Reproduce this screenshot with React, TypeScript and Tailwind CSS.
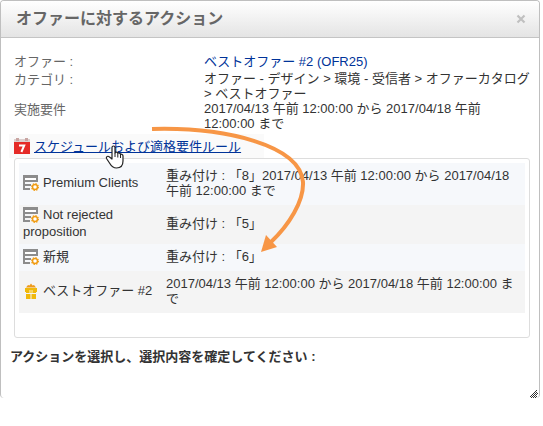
import React from "react";

function CalendarIcon() {
  return (
    <svg className="h-4 w-4 shrink-0" viewBox="0 0 16 16" aria-hidden="true">
      <rect x="0" y="1" width="16" height="4" fill="#dccfce" />
      <rect x="2" y="0" width="3" height="3" fill="#c9a5a2" />
      <rect x="11" y="0" width="3" height="3" fill="#c9a5a2" />
      <rect x="0" y="4" width="16" height="12" fill="#e52b27" />
      <path d="M5 7.5H10.2L7.4 14" fill="none" stroke="#fff" strokeWidth="2" />
    </svg>
  );
}

function RuleIcon() {
  return (
    <svg className="mr-1 inline-block h-4 w-4 align-[-4px]" viewBox="0 0 16 16" aria-hidden="true">
      <path d="M0 0H15V7H2V9H8V11H2V13H7V15H0Z" fill="#8c8c8c" />
      <path d="M2 3H13V5H2Z" fill="#fff" />
      <circle cx="12" cy="12" r="3.4" fill="#fff" stroke="#f09c14" strokeWidth="1.2" strokeDasharray="1.34 1.33" />
      <circle cx="12" cy="12" r="2.5" fill="#fff" stroke="#f09c14" strokeWidth="1.5" />
    </svg>
  );
}

function GiftIcon() {
  return (
    <svg className="mr-1 inline-block h-4 w-4 align-[-4px]" viewBox="0 0 16 16" aria-hidden="true">
      <path d="M3 4.5L5 2L6.5 2.5L8 0.5L9.5 2.5L11 2L13 4.5Z" fill="#ee9a1a" />
      <path d="M2 5H14V9H13V10H9.5V7H6.5V10H3V9H2Z" fill="#f0b90c" />
      <path d="M3 11H7.5V16H3ZM8.5 11H13V16H8.5Z" fill="#f0b90c" />
      <path d="M6.5 7H9.5V10H6.5Z" fill="#f8d45c" />
    </svg>
  );
}

const rules = [
  { icon: "rule", name: "Premium Clients", detail: "重み付け : 「8」2017/04/13 午前 12:00:00 から 2017/04/18 午前 12:00:00 まで", row: "h-[42px] bg-[#f6f8fb]" },
  { icon: "rule", name: "Not rejected proposition", detail: "重み付け : 「5」", row: "h-[39px] bg-[#f4f4f4]" },
  { icon: "rule", name: "新規", detail: "重み付け : 「6」", row: "h-[27px] bg-[#f6f8fb]" },
  { icon: "gift", name: "ベストオファー #2", detail: "2017/04/13 午前 12:00:00 から 2017/04/18 午前 12:00:00 まで", row: "h-[42px] bg-[#f4f4f4]" },
];

export default function App() {
  return (
    <div
      lang="ja"
      className="bg-white pr-[3px] font-['Liberation_Sans','Noto_Sans_CJK_JP',sans-serif] text-[13px] leading-[15px] text-[#333]"
    >
      <section role="dialog" aria-labelledby="title" className="relative rounded-[4px] border-x border-t border-[#bfbfbf] pb-8">
        <header className="flex h-[37px] items-center justify-between rounded-t-[3px] border-b border-[#c4c4c4] bg-linear-to-b from-white to-[#e4e4e4] pr-3 pl-[15px]">
          <h1 id="title" className="text-base leading-5 font-bold text-[#666]">オファーに対するアクション</h1>
          <button type="button" aria-label="閉じる" className="p-px">
            <svg className="h-2.5 w-2.5" viewBox="0 0 10 10">
              <path d="M1.5 1.5L8.5 8.5M8.5 1.5L1.5 8.5" stroke="#c0c0c0" strokeWidth="2.2" />
            </svg>
          </button>
        </header>

        <dl className="mt-[15px] grid grid-cols-[190px_1fr] pr-2 pl-[13px]">
          <dt className="leading-[18px] text-[#666]">オファー :</dt>
          <dd className="leading-[18px]">
            <a href="#offer" className="text-[#003399]">ベストオファー #2 (OFR25)</a>
          </dd>
          <dt className="leading-[18px] text-[#666]">カテゴリ :</dt>
          <dd>オファー - デザイン &gt; 環境 - 受信者 &gt; オファーカタログ &gt; ベストオファー</dd>
          <dt className="leading-[18px] text-[#666]">実施要件</dt>
          <dd>2017/04/13 午前 12:00:00 から 2017/04/18 午前 12:00:00 まで</dd>
        </dl>

        <div className="mt-[3px] ml-2 flex h-6 w-[255px] items-center gap-1 bg-[#fafafa] pl-[5px]">
          <CalendarIcon />
          <a href="#schedule" className="text-[#003399] underline">スケジュールおよび適格要件ルール</a>
        </div>

        <div className="mr-[9px] ml-[13px] rounded-[3px] border border-[#ddd] bg-white px-1 pt-1 pb-6">
          <table className="w-full table-fixed border-collapse">
            <colgroup>
              <col className="w-[143px]" />
              <col />
            </colgroup>
            <tbody>
              {rules.map((rule) => (
                <tr key={rule.name} className={rule.row}>
                  <td className="px-1 pt-0 pb-[3px] align-middle leading-[17px]">
                    {rule.icon === "gift" ? <GiftIcon /> : <RuleIcon />}
                    {rule.name}
                  </td>
                  <td className="px-1 pb-0.5 align-middle">{rule.detail}</td>
                </tr>
              ))}
            </tbody>
          </table>
        </div>

        <p className="mt-2.5 pl-[9px] leading-[18px] font-bold">アクションを選択し、選択内容を確定してください :</p>

        <svg className="pointer-events-none absolute top-[119px] left-[149px] h-[136px] w-[162px]" viewBox="150 120 162 136" aria-hidden="true">
          <path d="M152 129C225 127 300 145 303 182C304 201 289 225 271 242" fill="none" stroke="#f79646" strokeWidth="4" />
          <path d="M261 252L266 235L277 247Z" fill="#f79646" />
        </svg>

        <svg className="pointer-events-none absolute top-[144px] left-[104px] h-6 w-5" viewBox="0 0 20 24" aria-hidden="true">
          <path
            d="M7 14V2.5C7 0.5 10 0.5 10 2.5V8C10.5 6.5 12.8 7 12.8 8.5C13.5 7.5 15.5 8 15.5 9.5C16.5 8.8 18 9.5 18 11V16C18 20 16 23 11.5 23C8 23 6.5 21.5 4.5 18L1.5 13.5C0.8 11.5 3 10.5 4.5 12Z"
            fill="#fff"
            stroke="#222"
            strokeWidth="1.2"
            strokeLinejoin="round"
          />
          <path d="M10 8V12M12.8 9V12.5M15.5 10V13" stroke="#222" strokeWidth="1" />
        </svg>

        <svg className="absolute right-px bottom-0 h-2 w-2" viewBox="0 0 8 8" shapeRendering="crispEdges" aria-hidden="true">
          <path
            d="M6 0h1v1H6zM5 1h1v1H5zM4 2h1v1H4zM6 2h1v1H6zM3 3h1v1H3zM5 3h1v1H5zM7 3h1v1H7zM2 4h1v1H2zM4 4h1v1H4zM6 4h1v1H6zM1 5h1v1H1zM3 5h1v1H3zM5 5h1v1H5zM0 6h1v1H0zM2 6h1v1H2zM4 6h1v1H4zM6 6h1v1H6zM1 7h1v1H1zM3 7h1v1H3zM5 7h1v1H5z"
            fill="#333"
          />
        </svg>
      </section>
    </div>
  );
}
